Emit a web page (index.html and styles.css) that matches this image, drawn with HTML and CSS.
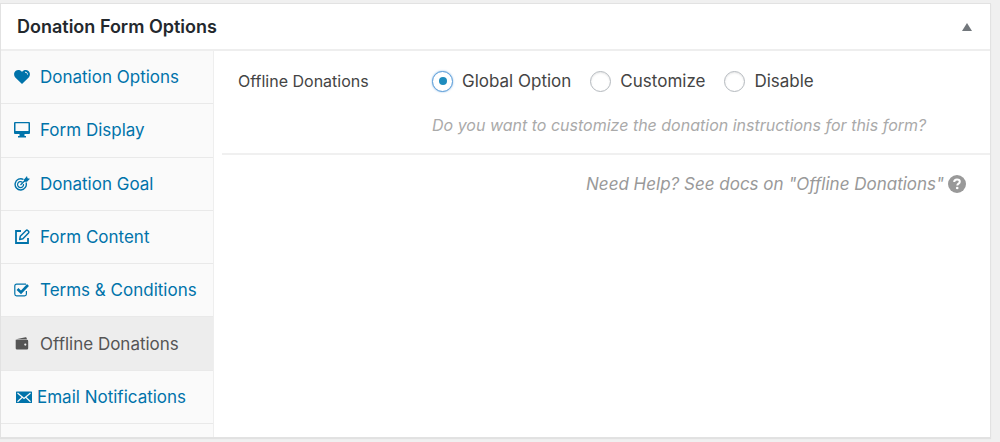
FILE: index.html
```html
<!DOCTYPE html>
<html lang="en">
<head>
<meta charset="utf-8">
<meta name="viewport" content="width=device-width, initial-scale=1">
<title>Donation Form Options</title>
<link rel="stylesheet" href="styles.css">
</head>
<body>
<section class="panel">
  <header class="panel-header">
    <h2 class="panel-title">Donation Form Options</h2>
    <button class="toggle" type="button" aria-label="Toggle panel" aria-expanded="true">
      <svg width="10" height="8" viewBox="0 0 10 8"><path d="M5 0l5 8H0z" fill="currentColor"/></svg>
    </button>
  </header>
  <div class="panel-body">
    <nav class="sidebar" aria-label="Form settings">
      <ul class="tabs">
        <li class="tab"><a class="tab-link" href="#options">
          <svg class="icon" viewBox="0 0 16 16"><path fill="currentColor" d="M8 15L1.300 8.400C-.5 6.400-.2 3.400 1.500 2 3.500.5 6.500.8 8 3 9.500.8 12.500.5 14.500 2c1.700 1.400 2 4.400.2 6.400z"/><path d="M11 3.200c1.500-.1 2.500.8 2.500 2.300" fill="none" stroke="#fafafa" stroke-width="1"/></svg>
          <span>Donation Options</span></a></li>
        <li class="tab"><a class="tab-link" href="#display">
          <svg class="icon" viewBox="0 0 16 16"><path fill="currentColor" fill-rule="evenodd" d="M1 0h14q1 0 1 1v10q0 1-1 1h-4.500v2H12v1.500H4V14h1.500v-2H1q-1 0-1-1V1q0-1 1-1zm.5 1.300V9h13V1.300z"/></svg>
          <span>Form Display</span></a></li>
        <li class="tab"><a class="tab-link" href="#goal">
          <svg class="icon" viewBox="0 0 16 16"><g fill="none" stroke="currentColor"><path d="M9.500 3.500A5.600 5.600 0 1 0 12 6.500" stroke-width="1.400"/><path d="M8.400 6.200A3 3 0 1 0 9.500 8" stroke-width="1.200"/><path d="M6.500 9L13 2.500" stroke-width="1.300"/></g><path fill="currentColor" d="M10 3.500L13 0l.5 2.300 2.500.5-3 3-3-.1z"/></svg>
          <span>Donation Goal</span></a></li>
        <li class="tab"><a class="tab-link" href="#content">
          <svg class="icon" viewBox="0 0 16 16"><path d="M7 2H2v12h12V9" fill="none" stroke="currentColor" stroke-width="1.800"/><path d="M5.700 10.500l.6-3.200 5.800-5.800q.8-.7 1.600 0l.8.800q.7.800 0 1.600L8.900 9.800z" fill="none" stroke="currentColor" stroke-width="1.500" stroke-linejoin="round"/></svg>
          <span>Form Content</span></a></li>
        <li class="tab"><a class="tab-link" href="#terms">
          <svg class="icon" viewBox="0 0 16 16"><path d="M12 2.200H2.600Q.8 2.200.8 4v8q0 1.800 1.800 1.800h8q1.800 0 1.800-1.800V9" fill="none" stroke="currentColor" stroke-width="1.200"/><path d="M3.500 7l3.500 3.500 7-7.500" fill="none" stroke="currentColor" stroke-width="2.600"/></svg>
          <span>Terms &amp; Conditions</span></a></li>
        <li class="tab tab-active"><a class="tab-link" href="#offline" aria-current="page">
          <svg class="icon" viewBox="0 0 16 16"><path fill="currentColor" d="M2 3.300l9.500-2q1-.2 1.200.9l.2 1.100zM1.700 3.800H13q1.200 0 1.200 1.200v7.300q0 1.300-1.200 1.300H3q-1.300 0-1.300-1.300z"/><circle cx="11.300" cy="8.600" r="1.100" fill="#ededed"/></svg>
          <span>Offline Donations</span></a></li>
        <li class="tab"><a class="tab-link tab-link-mail" href="#email">
          <svg class="icon" viewBox="0 0 16 16"><rect y="2.500" width="16" height="11.500" rx=".6" fill="currentColor"/><path d="M1.500 4L8 9.500 14.500 4M1.500 12.700L6 8.500M14.500 12.700L10 8.500" fill="none" stroke="#fafafa" stroke-width="1.200"/></svg>
          <span>Email Notifications</span></a></li>
      </ul>
    </nav>
    <div class="content">
      <div class="field" role="radiogroup" aria-labelledby="offline-label">
        <span class="field-label" id="offline-label">Offline Donations</span>
        <div class="field-body">
          <div class="choices">
            <label class="choice"><input class="radio" type="radio" name="offline" value="global" checked>Global Option</label>
            <label class="choice"><input class="radio" type="radio" name="offline" value="custom">Customize</label>
            <label class="choice"><input class="radio" type="radio" name="offline" value="disable">Disable</label>
          </div>
          <p class="hint">Do you want to customize the donation instructions for this form?</p>
        </div>
      </div>
      <p class="help"><a class="help-link" href="#docs">Need Help? See docs on "Offline Donations"
        <svg class="help-icon" viewBox="0 0 18 18"><circle cx="9" cy="9" r="9" fill="currentColor"/><path d="M6.200 7q0-2.600 2.800-2.600t2.800 2.300c0 1.900-2.500 1.900-2.500 3.800" fill="none" stroke="#fff" stroke-width="2"/><circle cx="9.200" cy="13" r="1.300" fill="#fff"/></svg></a></p>
    </div>
  </div>
</section>
</body>
</html>
```
FILE: styles.css
```css
* {
  box-sizing: border-box;
}

body {
  margin: 0;
  padding: 3px 9px 4px 0;
  background: #f0f0f0;
  color: #444;
  font-family: Inter, "Liberation Sans", sans-serif;
  font-size: 17px;
  line-height: 24px;
}

.panel {
  display: flex;
  flex-direction: column;
  min-height: calc(100vh - 7px);
  border: 1px solid #e2e2e2;
  background: #fff;
  box-shadow: 0 1px 1px rgba(0, 0, 0, 0.06);
}

.panel-header {
  display: flex;
  align-items: center;
  justify-content: space-between;
  padding: 11px 18px 10px 16px;
  border-bottom: 2px solid #eee;
}

.panel-title {
  margin: 0;
  color: #23282d;
  font-size: 18px;
  font-weight: 600;
  line-height: 24px;
}

.toggle {
  display: flex;
  padding: 0;
  border: 0;
  background: none;
  color: #72777c;
}

.panel-body {
  display: flex;
  flex: 1;
}

.sidebar {
  flex: none;
  width: 213px;
  border-right: 1px solid #eee;
  background: #fafafa;
}

.tabs {
  display: flex;
  flex-direction: column;
  min-height: 373px;
  margin: 0;
  padding: 0;
  list-style: none;
}

.tab {
  display: flex;
  flex: 1;
  border-bottom: 1px solid #e9e9e9;
}

.tab-link {
  display: flex;
  flex: 1;
  align-items: center;
  gap: 10px;
  padding: 0 13px;
  color: #0073aa;
  text-decoration: none;
  white-space: nowrap;
}

.tab-link-mail {
  gap: 5px;
  padding-left: 15px;
}

.tab-active {
  background: #ededed;
}

.tab-active .tab-link {
  color: #555;
}

.icon {
  flex: none;
  width: 16px;
  height: 16px;
}

.content {
  flex: 1;
  padding-left: 8px;
}

.field {
  display: flex;
  padding: 18px 16px 16px;
  border-bottom: 2px solid #f0f0f0;
}

.field-label {
  flex: none;
  width: 194px;
  font-size: 16px;
}

.choices {
  display: flex;
  flex-wrap: wrap;
  gap: 19px;
}

.choice {
  display: flex;
  align-items: center;
  gap: 9px;
}

.radio {
  display: grid;
  place-items: center;
  width: 21px;
  height: 21px;
  margin: 0;
  appearance: none;
  border: 1px solid #b4b9be;
  border-radius: 50%;
  background: #fff;
  box-shadow: inset 0 1px 2px rgba(0, 0, 0, 0.1);
}

.radio:checked {
  border-color: #5b9dd9;
  box-shadow: 0 0 2px rgba(91, 157, 217, 0.8);
}

.radio:checked::before {
  width: 8px;
  height: 8px;
  border-radius: 50%;
  background: #1e8cbe;
  content: "";
}

.hint {
  margin: 20px 0 0;
  color: #aaa;
  font-size: 16px;
  font-style: italic;
}

.help {
  margin: 0;
  padding: 17px 24px;
}

.help-link {
  display: flex;
  align-items: center;
  justify-content: flex-end;
  gap: 4px;
  color: #999;
  font-style: italic;
  text-decoration: none;
}

.help-icon {
  flex: none;
  width: 18px;
  height: 18px;
}
```
